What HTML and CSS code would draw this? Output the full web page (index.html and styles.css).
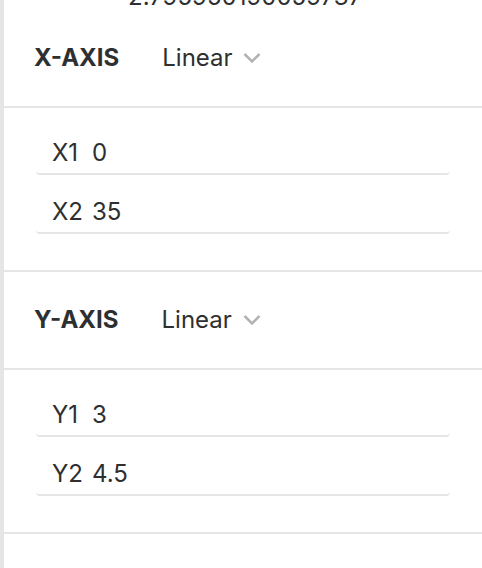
FILE: index.html
```html
<!DOCTYPE html>
<html lang="en">
<head>
<meta charset="utf-8">
<title>Axis settings</title>
<link rel="stylesheet" href="styles.css">
</head>
<body>
<main class="panel">
  <div class="readout"><output class="readout-value">2.795950190059737</output></div>
  <section>
    <header class="axis-header">
      <h2 class="axis-title"><label for="x-scale">X-AXIS</label></h2>
      <div class="scale">
        <select id="x-scale" class="scale-select"><option>Linear</option></select>
        <svg class="chevron" viewBox="0 0 18 12" aria-hidden="true"><path d="M1.5 2 9 9.5 16.5 2"/></svg>
      </div>
    </header>
    <div class="fields">
      <div class="field"><label class="field-label" for="x1">X1</label><input class="field-input" id="x1" value="0"></div>
      <div class="field"><label class="field-label" for="x2">X2</label><input class="field-input" id="x2" value="35"></div>
    </div>
  </section>
  <section>
    <header class="axis-header">
      <h2 class="axis-title"><label for="y-scale">Y-AXIS</label></h2>
      <div class="scale">
        <select id="y-scale" class="scale-select"><option>Linear</option></select>
        <svg class="chevron" viewBox="0 0 18 12" aria-hidden="true"><path d="M1.5 2 9 9.5 16.5 2"/></svg>
      </div>
    </header>
    <div class="fields">
      <div class="field"><label class="field-label" for="y1">Y1</label><input class="field-input" id="y1" value="3"></div>
      <div class="field"><label class="field-label" for="y2">Y2</label><input class="field-input" id="y2" value="4.5"></div>
    </div>
  </section>
</main>
</body>
</html>
```
FILE: styles.css
```css
* { box-sizing: border-box; }
body {
  margin: 0;
  background: #fff;
  color: #2e2f30;
  font: 24px/32px Inter, "Liberation Sans", sans-serif;
}
.panel {
  min-height: 100vh;
  border-left: 4px solid #e5e5e5;
}
.readout {
  display: flex;
  align-items: flex-end;
  height: 10px;
  padding: 0 30px 0 124px;
  overflow: hidden;
}
.readout-value { line-height: 26px; }
.axis-header {
  display: flex;
  align-items: center;
  gap: 43px;
  height: 98px;
  padding: 0 30px;
  border-bottom: 2px solid #e5e5e5;
}
.axis-title {
  margin: 0;
  font-size: 24px;
  font-weight: 700;
}
.scale {
  display: grid;
  align-items: center;
}
.scale-select {
  grid-area: 1 / 1;
  appearance: none;
  margin: 0;
  padding: 0 28px 0 0;
  border: 0;
  background: none;
  color: inherit;
  font: inherit;
}
.chevron {
  grid-area: 1 / 1;
  justify-self: end;
  width: 18px;
  height: 12px;
  fill: none;
  stroke: #b3b3b3;
  stroke-width: 2.5;
  pointer-events: none;
}
.fields {
  display: grid;
  grid-template-columns: minmax(0, 1fr);
  gap: 17px;
  padding: 25px 32px 36px;
  border-bottom: 2px solid #e5e5e5;
}
.field {
  display: flex;
  align-items: center;
  height: 42px;
  padding-left: 16px;
  border-bottom: 2px solid #e5e5e5;
  border-radius: 4px;
}
.field-label { width: 40px; }
.field-input {
  flex: 1;
  min-width: 0;
  padding: 0;
  border: 0;
  outline: 0;
  background: none;
  color: inherit;
  font: inherit;
}
```
